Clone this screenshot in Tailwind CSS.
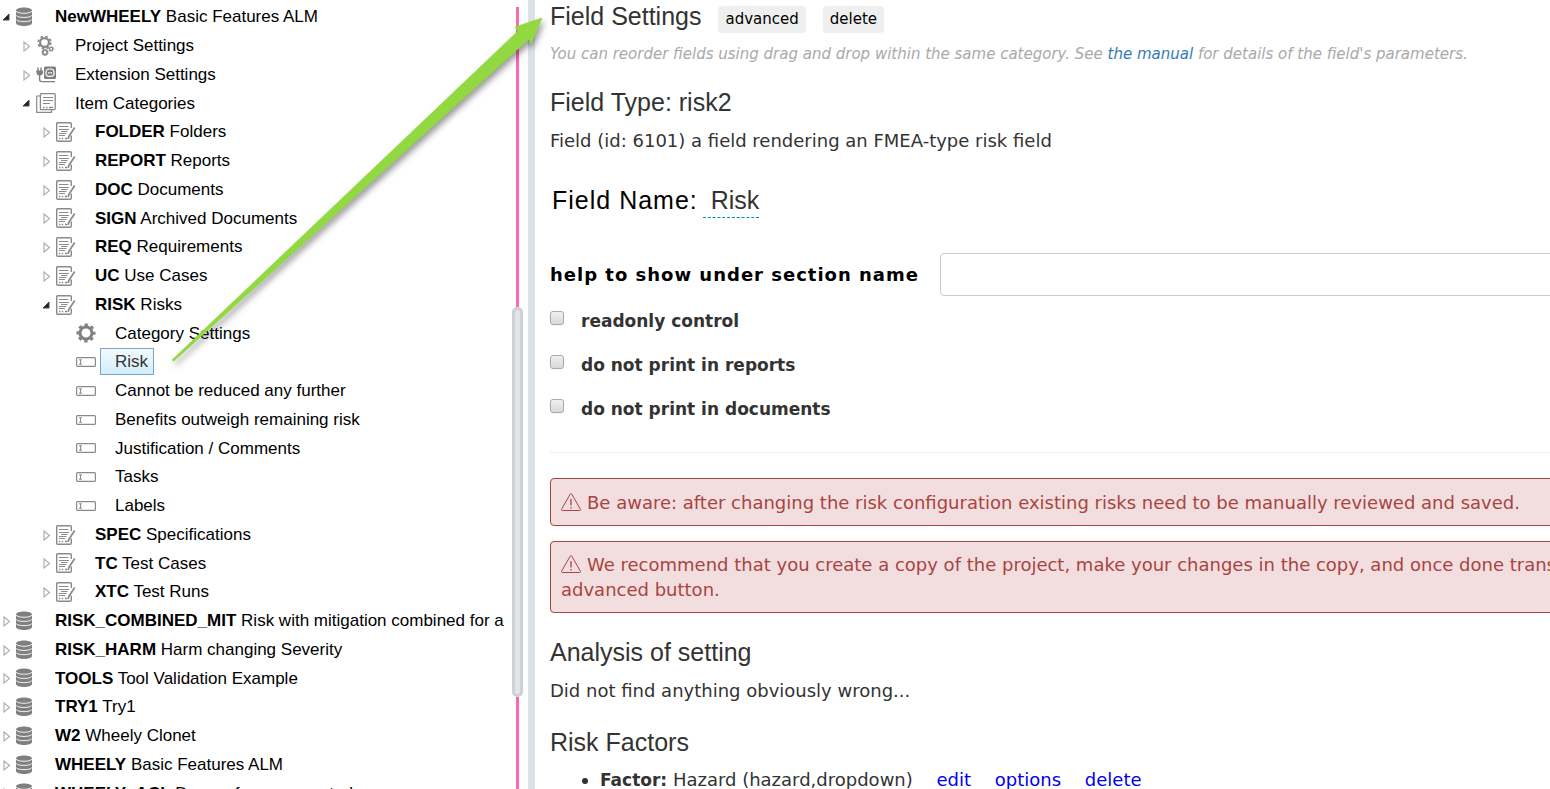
<!DOCTYPE html>
<html lang="en">
<head>
  <meta charset="UTF-8" />
  <meta name="viewport" content="width=device-width, initial-scale=1.0" />
  <title>Field Settings</title>
  <script src="https://cdn.jsdelivr.net/npm/@tailwindcss/browser@4"></script>
</head>
<body class="relative flex h-screen overflow-hidden bg-white font-['DejaVu_Sans',sans-serif] text-[18px] text-[#333]">

  <!-- Icons used by the tree -->
  <svg class="hidden">
    <symbol id="open" viewBox="0 0 8 8"><path d="M7 1V7H1Z" fill="#222" stroke="#444" stroke-linejoin="round" /></symbol>
    <symbol id="closed" viewBox="0 0 8 12"><path d="M1 2L6.5 6.5L1 11Z" fill="#fff" stroke="#b0b0b0" stroke-width="1.2" /></symbol>
    <symbol id="db" viewBox="0 0 20 20">
      <path d="M0 3.5C0 -0.5 16 -0.5 16 3.5V16C16 20 0 20 0 16Z" fill="#808080" />
      <path d="M0 4C1 7 15 7 16 4M0 8.2C1 11.2 15 11.2 16 8.2M0 12.4C1 15.4 15 15.4 16 12.4" fill="none" stroke="#fff" stroke-width="0.9" />
    </symbol>
    <symbol id="gears" viewBox="0 0 20 20" fill="none" stroke="#888">
      <circle cx="8.5" cy="6.5" r="4.4" stroke-width="2.2" />
      <circle cx="8.5" cy="6.5" r="6.2" stroke-width="1.8" stroke-dasharray="2.5 2.37" />
      <circle cx="9" cy="16.4" r="2.2" stroke-width="1.7" />
      <circle cx="9" cy="16.4" r="3.2" stroke-width="0.9" stroke-dasharray="1.3 1.21" />
      <circle cx="15.2" cy="13" r="1.7" stroke-width="1.3" />
      <circle cx="15.2" cy="13" r="2.6" stroke-width="0.7" stroke-dasharray="1 1.04" />
    </symbol>
    <symbol id="plug" viewBox="0 0 20 20">
      <rect x="8" y="1.5" width="12" height="12.5" rx="1.5" fill="#808080" />
      <rect x="10" y="4" width="8" height="7.4" rx="3.2" fill="none" stroke="#fff" stroke-width="1.2" />
      <path d="M12.2 7.7H13.6M14.6 7.7H16" stroke="#fff" stroke-width="1.5" />
      <path d="M0 5.5H7V8C7 9.6 5.4 10.5 3.5 10.5C1.6 10.5 0.6 9.6 0.6 8Z" fill="#808080" />
      <path d="M2 2.5V6M5 2.5V6M3.6 10V14.5C3.6 16 4.4 16.6 5.6 16.6H19" fill="none" stroke="#808080" stroke-width="1.4" />
    </symbol>
    <symbol id="pages" viewBox="0 0 20 20" fill="none" stroke="#8a8a8a">
      <path d="M4 3H0.7V19.3H15.5V17" stroke-width="1.2" />
      <rect x="4.4" y="0.7" width="14.8" height="16" rx="1" stroke-width="1.3" />
      <path d="M7 4.5H17M7 7.5H17M7 10.5H14" />
      <path d="M7 14.5H8.5M10 14.5H11.5M13 14.5H17" stroke-width="1.4" />
    </symbol>
    <symbol id="doc" viewBox="0 0 20 20" fill="none" stroke="#8a8a8a">
      <path d="M15.3 6V2C15.3 1 15 0.7 14 0.7H1.7C1 0.7 0.7 1 0.7 1.7V18.3C0.7 19 1 19.3 1.7 19.3H14C15 19.3 15.3 19 15.3 18V13.5" stroke-width="1.4" />
      <path d="M3 4.5H12.5M3 7.5H13M5 9.5H11.5M3 11.5H10.5M3 13.5H9" />
      <path d="M3 16.5H4.4M5.8 16.5H7.2M9 16.5H11" stroke-width="1.4" />
      <path d="M18.7 5.5L13 14.2L12 17" stroke-width="1.7" />
    </symbol>
    <symbol id="gear" viewBox="0 0 20 20" fill="none" stroke="#808080">
      <circle cx="10" cy="10" r="6" stroke-width="3" />
      <circle cx="10" cy="10" r="8.3" stroke-width="2.4" stroke-dasharray="3.4 3.12" stroke-dashoffset="1.7" />
    </symbol>
    <symbol id="field" viewBox="0 0 20 20" fill="none" stroke="#8a8a8a">
      <rect x="0.6" y="5.6" width="18.8" height="8.8" rx="1" stroke-width="1.2" />
      <path d="M3 7.8H6M4.5 8V12.2M3 12.2H6" />
    </symbol>
    <symbol id="warning" viewBox="0 0 20 18" fill="none" stroke="#a94442">
      <path d="M9.2 1.2C9.6 0.4 10.4 0.4 10.8 1.2L19.4 16.2C19.7 17 19.4 17.5 18.6 17.5H1.4C0.6 17.5 0.3 17 0.6 16.2Z" />
      <path d="M10 6V12.5M10 14V15.5" stroke-width="1.3" />
    </symbol>
  </svg>

  <!-- Project tree -->
  <nav class="flex w-[528px] shrink-0">
    <ul id="tree" class="w-[512px] overflow-hidden pt-[2px] font-['Liberation_Sans',Arial,sans-serif] text-[17px] text-black"></ul>
    <div class="flex w-[11px] flex-col items-center pt-[7px]">
      <div class="h-[300px] w-[3px] bg-[#ff69b4]"></div>
      <div class="h-[390px] w-[11px] shrink-0 rounded-[5px] border-3 border-[#ccd3d8] bg-[#e4e4e4]"></div>
      <div class="w-[3px] flex-1 bg-[#ff69b4]"></div>
    </div>
  </nav>
  <div class="w-[7px] shrink-0 bg-[#dce1e5]"></div>

  <!-- Field settings -->
  <main class="min-w-0 flex-1 overflow-hidden pl-[15px]">
    <div class="-mr-6">
      <div class="flex items-start pt-[3px] leading-[27px]">
        <h2 class="font-['Liberation_Sans',Arial,sans-serif] text-[25px]">Field Settings</h2>
        <button class="mt-[3px] ml-[17px] h-[27px] rounded-sm bg-[#efefef] px-[7px] text-[15px] text-black">advanced</button>
        <button class="mt-[3px] ml-[17px] h-[27px] rounded-sm bg-[#efefef] px-[7px] text-[15px] text-black">delete</button>
      </div>
      <p class="mt-[9px] text-[15px] leading-[24px] whitespace-nowrap text-[#a9a9a9] italic">You can reorder fields using drag and drop within the same category. See <a href="#" class="text-[#337ab7]">the manual</a> for details of the field's parameters.</p>

      <h2 class="mt-[22px] font-['Liberation_Sans',Arial,sans-serif] text-[25px] leading-[28px]">Field Type: risk2</h2>
      <p class="mt-[12px] leading-[25px]">Field (id: 6101) a field rendering an FMEA-type risk field</p>

      <div class="mt-[30px] flex items-start pl-[2px] font-['Liberation_Sans',Arial,sans-serif] text-[25px] leading-[34px]">
        <h2 class="tracking-[1px] text-black">Field Name:</h2>
        <a href="#" class="ml-[5px] border-b border-dashed border-[#0088cc] pl-2">Risk</a>
      </div>

      <div class="mt-[35px] flex items-center">
        <label for="help" class="w-[390px] shrink-0 font-bold tracking-[1px] text-black">help to show under section name</label>
        <input id="help" type="text" class="h-[43px] flex-1 rounded-sm border border-[#ccc] px-3" />
      </div>

      <div class="mt-[2px] text-[17px] font-bold">
        <div class="flex h-11 items-center gap-[17px]">
          <input id="readonly" type="checkbox" class="mb-1 size-[14px] appearance-none rounded-[3px] border border-[#aaa] bg-linear-to-b from-[#f0f0f0] to-[#d9d9d9] shadow-xs" />
          <label for="readonly" class="pt-[3px]">readonly control</label>
        </div>
        <div class="flex h-11 items-center gap-[17px]">
          <input id="noreport" type="checkbox" class="mb-1 size-[14px] appearance-none rounded-[3px] border border-[#aaa] bg-linear-to-b from-[#f0f0f0] to-[#d9d9d9] shadow-xs" />
          <label for="noreport" class="pt-[3px]">do not print in reports</label>
        </div>
        <div class="flex h-11 items-center gap-[17px]">
          <input id="nodoc" type="checkbox" class="mb-1 size-[14px] appearance-none rounded-[3px] border border-[#aaa] bg-linear-to-b from-[#f0f0f0] to-[#d9d9d9] shadow-xs" />
          <label for="nodoc" class="pt-[3px]">do not print in documents</label>
        </div>
      </div>

      <hr class="mt-[22px] border-[#eee]" />

      <div class="mt-[25px] rounded-sm border border-[#a94442] bg-[#f2dede] px-[10px] pt-[11px] pb-[10px] leading-[25px] whitespace-nowrap text-[#a94442]">
        <svg class="mr-[6px] inline h-[18px] w-5 align-[-2px]"><use href="#warning" /></svg>Be aware: after changing the risk configuration existing risks need to be manually reviewed and saved.
      </div>
      <div class="mt-[15px] rounded-sm border border-[#a94442] bg-[#f2dede] px-[10px] py-[10px] leading-[25px] whitespace-nowrap text-[#a94442]">
        <svg class="mr-[6px] inline h-[18px] w-5 align-[-2px]"><use href="#warning" /></svg>We recommend that you create a copy of the project, make your changes in the copy, and once done transfer<br />advanced button.
      </div>

      <h2 class="mt-[25px] font-['Liberation_Sans',Arial,sans-serif] text-[25px] leading-[28px]">Analysis of setting</h2>
      <p class="mt-[12px] leading-[25px]">Did not find anything obviously wrong...</p>

      <h2 class="mt-[25px] font-['Liberation_Sans',Arial,sans-serif] text-[25px] leading-[28px]">Risk Factors</h2>
      <ul class="mt-[11px] list-disc pl-[50px] leading-[25px]">
        <li><b class="text-[17px]">Factor:</b> Hazard (hazard,dropdown)
          <a href="#" class="ml-[18px] text-[#0000ee]">edit</a>
          <a href="#" class="ml-[18px] text-[#0000ee]">options</a>
          <a href="#" class="ml-[18px] text-[#0000ee]">delete</a>
        </li>
      </ul>
    </div>
  </main>

  <!-- Arrow from the tree item to its settings -->
  <svg class="pointer-events-none absolute top-0 left-0 h-[380px] w-[560px] drop-shadow-[2px_4px_3px_rgba(0,0,0,0.4)]">
    <path d="M172 360L518 31L515 27L542 18L531 44L529 39L174 361Z" fill="#92d840" stroke="#92d840" stroke-width="0.6" />
  </svg>

  <script>
    // level, toggle, icon, code, name
    const rows = [
      [0, "open", "db", "NewWHEELY", "Basic Features ALM"],
      [1, "closed", "gears", "", "Project Settings"],
      [1, "closed", "plug", "", "Extension Settings"],
      [1, "open", "pages", "", "Item Categories"],
      [2, "closed", "doc", "FOLDER", "Folders"],
      [2, "closed", "doc", "REPORT", "Reports"],
      [2, "closed", "doc", "DOC", "Documents"],
      [2, "closed", "doc", "SIGN", "Archived Documents"],
      [2, "closed", "doc", "REQ", "Requirements"],
      [2, "closed", "doc", "UC", "Use Cases"],
      [2, "open", "doc", "RISK", "Risks"],
      [3, "", "gear", "", "Category Settings"],
      [3, "", "field", "", "Risk"],
      [3, "", "field", "", "Cannot be reduced any further"],
      [3, "", "field", "", "Benefits outweigh remaining risk"],
      [3, "", "field", "", "Justification / Comments"],
      [3, "", "field", "", "Tasks"],
      [3, "", "field", "", "Labels"],
      [2, "closed", "doc", "SPEC", "Specifications"],
      [2, "closed", "doc", "TC", "Test Cases"],
      [2, "closed", "doc", "XTC", "Test Runs"],
      [0, "closed", "db", "RISK_COMBINED_MIT", "Risk with mitigation combined for a"],
      [0, "closed", "db", "RISK_HARM", "Harm changing Severity"],
      [0, "closed", "db", "TOOLS", "Tool Validation Example"],
      [0, "closed", "db", "TRY1", "Try1"],
      [0, "closed", "db", "W2", "Wheely Clonet"],
      [0, "closed", "db", "WHEELY", "Basic Features ALM"],
      [0, "closed", "db", "WHEELY_ACL", "Demo of access control"]
    ];
    const indent = ["pl-0", "pl-5", "pl-10", "pl-15"];
    const toggles = {
      open: `<button aria-label="collapse" class="w-4 shrink-0 pl-[2px]"><svg class="size-2"><use href="#open" /></svg></button>`,
      closed: `<button aria-label="expand" class="w-4 shrink-0 pl-[3px]"><svg class="h-3 w-2"><use href="#closed" /></svg></button>`,
      "": `<span class="w-4 shrink-0"></span>`
    };

    document.getElementById("tree").innerHTML = rows.map(([level, toggle, icon, code, name]) => `
      <li class="flex h-[29px] items-center whitespace-nowrap nth-[4n]:h-[28px] ${indent[level]}">
        ${toggles[toggle]}
        <svg class="size-5 shrink-0"><use href="#${icon}" /></svg>
        <a href="#" class="ml-1 border pr-[5px] pl-[14px] leading-[25px] ${name === "Risk" ? "border-[#7da2ce] bg-linear-to-b from-[#f2fafd] to-[#d3eefb] text-[#333]" : "border-transparent"}">${code ? `<b>${code}</b> ` : ""}${name}</a>
      </li>`).join("");
  </script>
</body>
</html>
